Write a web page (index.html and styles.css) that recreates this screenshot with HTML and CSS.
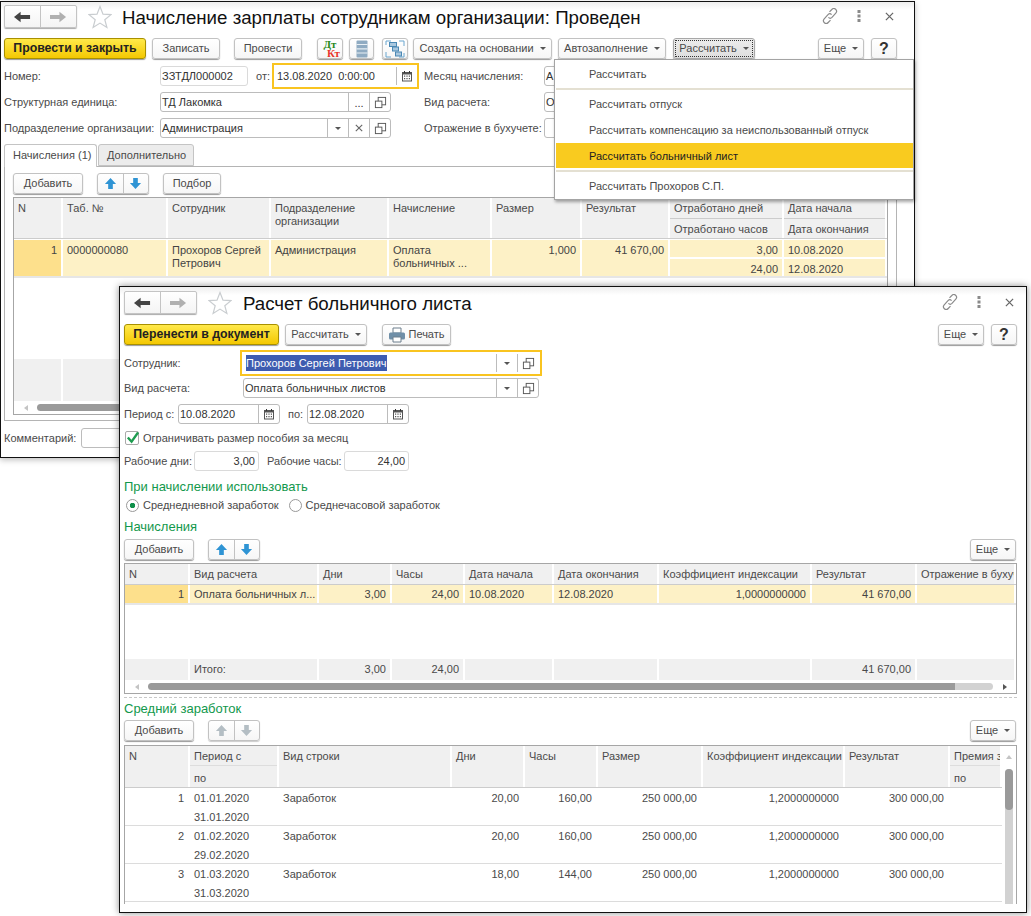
FILE: index.html

```html
<!DOCTYPE html>
<html lang="ru">
<head>
  <meta charset="UTF-8" />
  <title>Начисление зарплаты</title>
  <link rel="stylesheet" href="styles.css">
</head>
<body>
  <svg class="sprite" xmlns="http://www.w3.org/2000/svg">
    <symbol id="i-back" viewBox="0 0 18 12"><path d="M0 6 7 0.5V4H17V8H7V11.5Z"/></symbol>
    <symbol id="i-fwd" viewBox="0 0 18 12"><path d="M17 6 10 0.5V4H0V8H10V11.5Z"/></symbol>
    <symbol id="i-star" viewBox="0 0 24 24"><path d="M12 1.5 15 9.2 23 9.6 16.8 14.7 18.9 22.5 12 18.1 5.1 22.5 7.2 14.7 1 9.6 9 9.2Z" fill="#fff" stroke="#c9cdd0" stroke-width="1.2"/></symbol>
    <symbol id="i-link" viewBox="0 0 16 16"><g fill="none" stroke="#8a8a8a" stroke-width="1.2"><path d="M7.5 3.8 9.8 1.5a2.6 2.6 0 0 1 4 3.6L10 9.4a2.6 2.6 0 0 1-3.6 0"/><path d="M8.5 12.2 6.2 14.5a2.6 2.6 0 0 1-4-3.6L6 6.6a2.6 2.6 0 0 1 3.6 0"/></g></symbol>
    <symbol id="i-dots" viewBox="0 0 4 14"><g fill="#8a8a8a"><rect x="0.5" y="1" width="3" height="3"/><rect x="0.5" y="5.5" width="3" height="3"/><rect x="0.5" y="10" width="3" height="3"/></g></symbol>
    <symbol id="i-close" viewBox="0 0 10 10"><path d="M1 1 9 9M9 1 1 9" stroke="#666" stroke-width="1.4" fill="none"/></symbol>
    <symbol id="i-open" viewBox="0 0 14 14"><g fill="#fff" stroke="#555" stroke-width="1"><rect x="4.5" y="1.5" width="8" height="8"/><rect x="1.5" y="5.5" width="7" height="7"/></g></symbol>
    <symbol id="i-cal" viewBox="0 0 12 12"><path d="M1 2H11V11.5H1Z" fill="#555"/><path d="M2 4.5H10V10.5H2Z" fill="#fff"/><path d="M3 1H4V3H3ZM8 1H9V3H8Z" fill="#333"/><path d="M3 5.5H4.2V6.7H3ZM5.4 5.5H6.6V6.7H5.4ZM7.8 5.5H9V6.7H7.8ZM3 8H4.2V9.2H3ZM5.4 8H6.6V9.2H5.4ZM7.8 8H9V9.2H7.8Z" fill="#555"/></symbol>
    <symbol id="i-up" viewBox="0 0 14 14"><path d="M7 1 13 7.5H9.5V13H4.5V7.5H1Z"/></symbol>
    <symbol id="i-down" viewBox="0 0 14 14"><path d="M7 13 13 6.5H9.5V1H4.5V6.5H1Z"/></symbol>
    <symbol id="i-list" viewBox="0 0 14 18"><rect x="1.5" y="0.5" width="11" height="17" rx="1" fill="#8fabc2"/><path d="M1.5 4.5H12.5M1.5 8.8H12.5M1.5 13H12.5" stroke="#e8eff4" stroke-width="1.2"/></symbol>
    <symbol id="i-struct" viewBox="0 0 20 18"><path d="M1 5V1H6M19 13V17H14M1 12V17H6M19 6V1H14" fill="none" stroke="#6aa6cf" stroke-width="1"/><g fill="#a9c7de" stroke="#4a88b4"><rect x="4.5" y="2.5" width="7" height="4"/><rect x="7.5" y="7" width="6" height="4"/><rect x="10.5" y="12" width="6" height="4"/></g></symbol>
    <symbol id="i-print" viewBox="0 0 18 16"><path d="M5 1H13V6H5Z" fill="#fff" stroke="#6d7f8d"/><rect x="1" y="5.5" width="16" height="7" rx="1.5" fill="#6f8fa8"/><path d="M5 10H13V15H5Z" fill="#fff" stroke="#6d7f8d"/></symbol>
    <symbol id="i-check" viewBox="0 0 14 14"><path d="M2 7 6 11.5 13 1.5" fill="none" stroke="#1e9c50" stroke-width="2.6"/></symbol>
  </svg>

  <!-- Документ начисления -->
  <section class="window window-doc">
    <header class="win-head">
      <div class="nav-group">
        <span class="nav-btn nav-back"><svg class="nav-ico"><use href="#i-back"/></svg></span>
        <span class="nav-btn nav-fwd"><svg class="nav-ico"><use href="#i-fwd"/></svg></span>
      </div>
      <svg class="star"><use href="#i-star"/></svg>
      <h1 class="win-title">Начисление зарплаты сотрудникам организации: Проведен</h1>
      <div class="head-icons">
        <svg class="ico-link"><use href="#i-link"/></svg>
        <svg class="ico-dots"><use href="#i-dots"/></svg>
        <svg class="ico-close"><use href="#i-close"/></svg>
      </div>
    </header>

    <div class="toolbar">
      <button class="btn btn-primary btn-post-close">Провести и закрыть</button>
      <button class="btn btn-save">Записать</button>
      <button class="btn btn-post sep">Провести</button>
      <button class="btn btn-icon btn-dtkt"><span class="dtkt"><b class="dt">Дт</b><b class="kt">Кт</b></span></button>
      <button class="btn btn-icon btn-list"><svg class="ico-list"><use href="#i-list"/></svg></button>
      <button class="btn btn-icon btn-struct"><svg class="ico-struct"><use href="#i-struct"/></svg></button>
      <button class="btn btn-create">Создать на основании<i class="caret"></i></button>
      <button class="btn btn-auto">Автозаполнение<i class="caret"></i></button>
      <button class="btn btn-calc btn-pressed">Рассчитать<i class="caret"></i></button>
      <button class="btn btn-more push">Еще<i class="caret"></i></button>
      <button class="btn btn-help">?</button>
    </div>

    <div class="form-row">
      <div class="col-left">
        <label class="lbl lbl-doc">Номер:</label>
        <div class="field field-num field-light"><span class="val">ЗЗТДЛ000002</span></div>
        <label class="lbl lbl-from">от:</label>
        <div class="field field-date focus"><span class="val">13.08.2020&nbsp;&nbsp;0:00:00</span><span class="fbtn"><svg class="ico-cal"><use href="#i-cal"/></svg></span></div>
      </div>
      <label class="lbl lbl-right">Месяц начисления:</label>
      <div class="field field-right"><span class="val">А</span></div>
    </div>
    <div class="form-row">
      <div class="col-left">
        <label class="lbl lbl-doc">Структурная единица:</label>
        <div class="field field-doc"><span class="val">ТД Лакомка</span><span class="fbtn fdots">...</span><span class="fbtn"><svg class="ico-open"><use href="#i-open"/></svg></span></div>
      </div>
      <label class="lbl lbl-right">Вид расчета:</label>
      <div class="field field-right"><span class="val">О</span></div>
    </div>
    <div class="form-row">
      <div class="col-left">
        <label class="lbl lbl-doc">Подразделение организации:</label>
        <div class="field field-doc"><span class="val">Администрация</span><span class="fbtn"><i class="caret"></i></span><span class="fbtn"><svg class="ico-x"><use href="#i-close"/></svg></span><span class="fbtn"><svg class="ico-open"><use href="#i-open"/></svg></span></div>
      </div>
      <label class="lbl lbl-right">Отражение в бухучете:</label>
      <div class="field field-right"></div>
    </div>

    <div class="tabs">
      <div class="tab tab-active">Начисления (1)</div>
      <div class="tab">Дополнительно</div>
    </div>
    <div class="tab-panel">
      <div class="toolbar toolbar-inner">
        <button class="btn btn-add">Добавить</button>
        <div class="arrows sep"><span class="arrow-btn"><svg class="ico-arrow"><use href="#i-up"/></svg></span><span class="arrow-btn"><svg class="ico-arrow"><use href="#i-down"/></svg></span></div>
        <button class="btn btn-pick sep">Подбор</button>
      </div>
      <div class="tbl tbl-doc">
        <div class="t-row t-head cols-doc">
          <div class="c">N</div><div class="c">Таб. №</div><div class="c">Сотрудник</div><div class="c">Подразделение организации</div><div class="c">Начисление</div><div class="c">Размер</div><div class="c">Результат</div>
          <div class="c stack"><div class="sub">Отработано дней</div><div class="sub">Отработано часов</div></div>
          <div class="c stack"><div class="sub">Дата начала</div><div class="sub">Дата окончания</div></div>
        </div>
        <div class="t-row t-sel cols-doc">
          <div class="c num c-mark">1</div><div class="c">0000000080</div><div class="c">Прохоров Сергей Петрович</div><div class="c">Администрация</div><div class="c">Оплата больничных ...</div><div class="c num">1,000</div><div class="c num">41 670,00</div>
          <div class="c stack"><div class="sub num">3,00</div><div class="sub num">24,00</div></div>
          <div class="c stack"><div class="sub">10.08.2020</div><div class="sub">12.08.2020</div></div>
        </div>
        <div class="t-fill"></div>
        <div class="t-row t-foot t-foot-doc cols-doc"><div class="c"></div><div class="c"></div><div class="c"></div><div class="c"></div><div class="c"></div><div class="c"></div><div class="c"></div><div class="c"></div><div class="c"></div></div>
        <div class="hscroll"><i class="arr-left"></i><div class="thumb"></div></div>
      </div>
    </div>

    <div class="form-row row-comment">
      <label class="lbl lbl-comment">Комментарий:</label>
      <div class="field field-comment"></div>
    </div>

    <!-- Меню кнопки Рассчитать -->
    <div class="menu">
      <div class="menu-item menu-tall">Рассчитать</div>
      <div class="menu-sep"></div>
      <div class="menu-item">Рассчитать отпуск</div>
      <div class="menu-item">Рассчитать компенсацию за неиспользованный отпуск</div>
      <div class="menu-item menu-hot">Рассчитать больничный лист</div>
      <div class="menu-sep menu-sep-low"></div>
      <div class="menu-item">Рассчитать Прохоров С.П.</div>
    </div>
  </section>

  <!-- Расчет больничного листа -->
  <section class="window window-calc">
    <header class="win-head">
      <div class="nav-group">
        <span class="nav-btn nav-back"><svg class="nav-ico"><use href="#i-back"/></svg></span>
        <span class="nav-btn nav-fwd"><svg class="nav-ico"><use href="#i-fwd"/></svg></span>
      </div>
      <svg class="star"><use href="#i-star"/></svg>
      <h1 class="win-title">Расчет больничного листа</h1>
      <div class="head-icons">
        <svg class="ico-link"><use href="#i-link"/></svg>
        <svg class="ico-dots"><use href="#i-dots"/></svg>
        <svg class="ico-close"><use href="#i-close"/></svg>
      </div>
    </header>

    <div class="toolbar">
      <button class="btn btn-primary btn-transfer">Перенести в документ</button>
      <button class="btn btn-calc">Рассчитать<i class="caret"></i></button>
      <button class="btn btn-print"><svg class="ico-print"><use href="#i-print"/></svg>Печать</button>
      <button class="btn btn-more push">Еще<i class="caret"></i></button>
      <button class="btn btn-help">?</button>
    </div>

    <div class="form-row row-emp">
      <label class="lbl lbl-calc">Сотрудник:</label>
      <div class="field field-emp focus"><span class="val"><span class="selected">Прохоров Сергей Петрович</span></span><span class="fbtn"><i class="caret"></i></span><span class="fbtn"><svg class="ico-open"><use href="#i-open"/></svg></span></div>
    </div>
    <div class="form-row row-kind">
      <label class="lbl lbl-calc">Вид расчета:</label>
      <div class="field field-kind"><span class="val">Оплата больничных листов</span><span class="fbtn"><i class="caret"></i></span><span class="fbtn"><svg class="ico-open"><use href="#i-open"/></svg></span></div>
    </div>
    <div class="form-row">
      <label class="lbl lbl-period">Период с:</label>
      <div class="field field-period"><span class="val">10.08.2020</span><span class="fbtn"><svg class="ico-cal"><use href="#i-cal"/></svg></span></div>
      <label class="lbl lbl-to">по:</label>
      <div class="field field-period"><span class="val">12.08.2020</span><span class="fbtn"><svg class="ico-cal"><use href="#i-cal"/></svg></span></div>
    </div>
    <div class="check-row">
      <span class="checkbox"><svg class="ico-check"><use href="#i-check"/></svg></span>
      <span class="lbl">Ограничивать размер пособия за месяц</span>
    </div>
    <div class="form-row">
      <label class="lbl lbl-days">Рабочие дни:</label>
      <div class="field field-num-small field-light"><span class="val val-right">3,00</span></div>
      <label class="lbl lbl-hours">Рабочие часы:</label>
      <div class="field field-num-small field-light"><span class="val val-right">24,00</span></div>
    </div>

    <div class="group-title group-use">При начислении использовать</div>
    <div class="radio-row">
      <span class="radio radio-on"></span><span class="lbl lbl-radio-1">Среднедневной заработок</span>
      <span class="radio"></span><span class="lbl">Среднечасовой заработок</span>
    </div>

    <div class="group-title group-acc">Начисления</div>
    <div class="toolbar toolbar-accr">
      <button class="btn btn-add">Добавить</button>
      <div class="arrows sep"><span class="arrow-btn"><svg class="ico-arrow"><use href="#i-up"/></svg></span><span class="arrow-btn"><svg class="ico-arrow"><use href="#i-down"/></svg></span></div>
      <button class="btn btn-more push">Еще<i class="caret"></i></button>
    </div>
    <div class="tbl tbl-accr">
      <div class="t-row t-head cols-accr">
        <div class="c">N</div><div class="c">Вид расчета</div><div class="c">Дни</div><div class="c">Часы</div><div class="c">Дата начала</div><div class="c">Дата окончания</div><div class="c">Коэффициент индексации</div><div class="c">Результат</div><div class="c">Отражение в бухучете</div>
      </div>
      <div class="t-row t-sel t-one cols-accr">
        <div class="c num c-mark">1</div><div class="c">Оплата больничных л...</div><div class="c num">3,00</div><div class="c num">24,00</div><div class="c">10.08.2020</div><div class="c">12.08.2020</div><div class="c num">1,0000000000</div><div class="c num">41 670,00</div><div class="c"></div>
      </div>
      <div class="t-fill"></div>
      <div class="t-row t-foot cols-accr">
        <div class="c"></div><div class="c">Итого:</div><div class="c num">3,00</div><div class="c num">24,00</div><div class="c"></div><div class="c"></div><div class="c"></div><div class="c num">41 670,00</div><div class="c"></div>
      </div>
      <div class="hscroll hscroll-calc"><i class="arr-left"></i><div class="thumb"></div><i class="arr-right"></i></div>
    </div>

    <div class="dashed"></div>
    <div class="group-title group-avg">Средний заработок</div>
    <div class="toolbar toolbar-avg">
      <button class="btn btn-add">Добавить</button>
      <div class="arrows arrows-off sep"><span class="arrow-btn"><svg class="ico-arrow"><use href="#i-up"/></svg></span><span class="arrow-btn"><svg class="ico-arrow"><use href="#i-down"/></svg></span></div>
      <button class="btn btn-more push">Еще<i class="caret"></i></button>
    </div>
    <div class="tbl tbl-avg">
      <div class="avg-body">
        <div class="t-row t-head t-head-avg cols-avg">
          <div class="c">N</div>
          <div class="c stack"><div class="sub">Период с</div><div class="sub">по</div></div>
          <div class="c">Вид строки</div><div class="c">Дни</div><div class="c">Часы</div><div class="c">Размер</div><div class="c">Коэффициент индексации</div><div class="c">Результат</div>
          <div class="c stack"><div class="sub">Премия за</div><div class="sub">по</div></div>
        </div>
        <div class="t-row t-data cols-avg">
          <div class="c num">1</div><div class="c c-dates">01.01.2020<br>31.01.2020</div><div class="c">Заработок</div><div class="c num">20,00</div><div class="c num">160,00</div><div class="c num">250 000,00</div><div class="c num">1,2000000000</div><div class="c num">300 000,00</div><div class="c"></div>
        </div>
        <div class="t-row t-data cols-avg">
          <div class="c num">2</div><div class="c c-dates">01.02.2020<br>29.02.2020</div><div class="c">Заработок</div><div class="c num">20,00</div><div class="c num">160,00</div><div class="c num">250 000,00</div><div class="c num">1,2000000000</div><div class="c num">300 000,00</div><div class="c"></div>
        </div>
        <div class="t-row t-data cols-avg">
          <div class="c num">3</div><div class="c c-dates">01.03.2020<br>31.03.2020</div><div class="c">Заработок</div><div class="c num">18,00</div><div class="c num">144,00</div><div class="c num">250 000,00</div><div class="c num">1,2000000000</div><div class="c num">300 000,00</div><div class="c"></div>
        </div>
      </div>
      <div class="vscroll"><i class="arr-up"></i><div class="vtrack"><div class="vthumb"></div></div></div>
    </div>
  </section>
</body>
</html>
```

FILE: styles.css

```css
* {
  box-sizing: border-box;
}
html, body {
  margin: 0;
  height: 916px;
  overflow: hidden;
  background: #fff;
}
body {
  font-family: "Liberation Sans", Arial, sans-serif;
  font-size: 11px;
  line-height: 13px;
  color: #4a4a4a;
}
.sprite {
  display: none;
}

/* windows lie on a free canvas */
.window {
  position: absolute;
  background: linear-gradient(#eee, #fff 8px);
  border: 1px solid #111;
  padding-left: 3px;
  padding-right: 17px;
}
.window-doc {
  left: 0;
  top: 1px;
  width: 915px;
  height: 457px;
  box-shadow: 0 2px 6px rgba(0,0,0,0.25);
}
.window-calc {
  left: 119px;
  top: 286px;
  width: 908px;
  height: 627px;
  padding-left: 4px;
  padding-right: 9px;
  overflow: hidden;
  box-shadow: 0 0 7px rgba(0,0,0,0.45);
}

/* header */
.win-head {
  display: flex;
  align-items: flex-start;
  height: 33px;
  padding-top: 3px;
}
.window-calc .win-head {
  height: 34px;
  padding-top: 4px;
}
.nav-group {
  display: flex;
  width: 73px;
  height: 23px;
  border: 1px solid #c4c4c4;
  border-radius: 2px;
  box-shadow: 0 1px 1px #aaa;
  background: linear-gradient(#fff, #f4f4f4);
}
.nav-btn {
  flex: 1;
  display: flex;
  align-items: center;
  justify-content: center;
}
.nav-back {
  border-right: 1px solid #c4c4c4;
}
.nav-ico {
  width: 17px;
  height: 12px;
}
.nav-back .nav-ico {
  fill: #444;
}
.nav-fwd .nav-ico {
  fill: #b0b0b0;
}
.star {
  width: 24px;
  height: 24px;
  margin-left: 11px;
}
.win-title {
  margin: 2px 0 0 10px;
  font-size: 18.7px;
  line-height: 21px;
  font-weight: normal;
  color: #111;
  white-space: nowrap;
}
.window-calc .win-title {
  margin-left: 11px;
}
.head-icons {
  margin-left: auto;
  display: flex;
  align-items: center;
  height: 22px;
}
.ico-link {
  width: 16px;
  height: 16px;
}
.ico-dots {
  width: 4px;
  height: 14px;
  margin-left: 19px;
}
.ico-close {
  width: 9px;
  height: 9px;
  margin-left: 24px;
  margin-right: 3px;
}

/* buttons */
.toolbar {
  display: flex;
  align-items: flex-start;
  gap: 6px;
  height: 22px;
  margin-top: 3px;
}
.btn {
  display: flex;
  align-items: center;
  justify-content: center;
  height: 21px;
  padding: 0;
  border: 1px solid #c2c2c2;
  border-radius: 3px;
  background: linear-gradient(#fff, #f6f6f6);
  box-shadow: 0 1px 1px #9a9a9a;
  font: inherit;
  color: #4a4a4a;
}
.btn-primary {
  border-color: #a89000;
  background: linear-gradient(#ffe94a, #f4c802);
  color: #222;
  font-size: 12.3px;
  font-weight: bold;
}
.btn-post-close { width: 142px; }
.btn-transfer { width: 155px; }
.btn-save { width: 68px; }
.btn-post { width: 68px; }
.btn-icon { width: 26px; }
.btn-dtkt { margin-left: 9px; }
.btn-list { width: 25px; }
.btn-struct { margin-left: 2px; }
.btn-create { width: 139px; margin-left: -1px; }
.btn-auto { width: 108px; }
.btn-calc { width: 82px; }
.btn-pressed {
  margin-left: 1px;
  background: linear-gradient(#ececec, #dedede);
  border-color: #a8a8a8;
  outline: 1px dotted #333;
  outline-offset: -3px;
}
.btn-more { width: 46px; }
.btn-help {
  width: 26px;
  margin-left: 1px;
  font-size: 16px;
  font-weight: bold;
  color: #333;
}
.btn-add { width: 70px; }
.btn-pick { width: 58px; }
.btn-print { width: 69px; margin-left: 9px; }
.sep { margin-left: 8px; }
.push { margin-left: auto; }
.caret {
  display: inline-block;
  margin-left: 6px;
  border-left: 3px solid transparent;
  border-right: 3px solid transparent;
  border-top: 3px solid #555;
}
.dtkt {
  display: flex;
  flex-direction: column;
  width: 20px;
  font-family: "Liberation Serif", serif;
  font-size: 11px;
  line-height: 9px;
}
.dt { color: #2a8a1a; }
.kt { color: #e8342a; text-align: right; }
.ico-list { width: 14px; height: 18px; }
.ico-struct { width: 20px; height: 18px; }
.ico-print { width: 18px; height: 16px; margin-right: 2px; }
.arrows {
  display: flex;
  width: 52px;
  height: 21px;
  border: 1px solid #c2c2c2;
  border-radius: 3px;
  background: linear-gradient(#fff, #f6f6f6);
  box-shadow: 0 1px 1px #9a9a9a;
}
.arrow-btn {
  flex: 1;
  display: flex;
  align-items: center;
  justify-content: center;
}
.arrow-btn + .arrow-btn {
  border-left: 1px solid #c2c2c2;
}
.ico-arrow {
  width: 13px;
  height: 13px;
  fill: #2f94d4;
}
.arrows-off {
  box-shadow: 0 1px 1px #ccc;
}
.arrows-off .ico-arrow {
  fill: #b4bec4;
}

/* form */
.form-row {
  display: flex;
  align-items: center;
  height: 20px;
  margin-top: 6px;
}
.col-left {
  display: flex;
  align-items: center;
  width: 420px;
  flex: none;
}
.lbl {
  flex: none;
  white-space: nowrap;
}
.lbl-doc { width: 156px; }
.lbl-from { width: 24px; padding-left: 8px; }
.lbl-right { width: 120px; }
.lbl-comment { width: 77px; }
.lbl-calc { width: 119px; }
.lbl-period { width: 54px; }
.lbl-to { width: 27px; padding-left: 8px; }
.lbl-days { width: 70px; }
.lbl-hours { width: 85px; padding-left: 8px; }
.lbl-radio-1 { margin-right: 8px; }
.field {
  display: flex;
  align-items: stretch;
  flex: none;
  height: 20px;
  border: 1px solid #bcbcbc;
  border-radius: 3px;
  background: #fff;
  color: #333;
}
.field-light {
  border-color: #dadada;
}
.val {
  flex: 1;
  padding-left: 1px;
  line-height: 18px;
  white-space: nowrap;
  overflow: hidden;
}
.val-right {
  padding-right: 3px;
  text-align: right;
}
.fbtn {
  flex: none;
  display: flex;
  align-items: center;
  justify-content: center;
  width: 21px;
  border-left: 1px solid #bcbcbc;
}
.fbtn .caret {
  margin-left: 0;
}
.fdots {
  align-items: flex-end;
  line-height: 15px;
}
.field.focus {
  height: 26px;
  margin: -3px 0;
  border: 2px solid #f9c420;
  border-radius: 0;
}
.focus .val {
  padding-left: 3px;
  line-height: 22px;
}
.focus .fbtn {
  margin: 2px 0;
}
.field-num { width: 88px; }
.field-date { width: 147px; }
.field-doc { width: 231px; }
.field-right { width: 120px; }
.field-comment { width: 300px; }
.field-kind { width: 296px; }
.field-emp { width: 302px; margin-left: -3px !important; padding-right: 2px; }
.field-emp .val { padding-left: 4px; }
.field-period { width: 102px; }
.field-num-small { width: 65px; }
.ico-cal { width: 12px; height: 12px; }
.ico-open { width: 13px; height: 13px; }
.ico-x { width: 8px; height: 8px; }
.selected {
  background: #3e5cb0;
  color: #fff;
  padding: 2px 0;
}
.row-emp { margin-top: 7px; }
.row-kind { margin-top: 5px; }
.row-comment { margin-top: 7px; }
.check-row {
  display: flex;
  align-items: center;
  height: 14px;
  margin-top: 7px;
}
.checkbox {
  width: 14px;
  height: 14px;
  margin: 0 4px 0 1px;
  border: 1px solid #aaa;
  border-radius: 2px;
  background: #fff;
}
.ico-check {
  display: block;
  width: 13px;
  height: 13px;
  margin-top: -1px;
}
.radio-row {
  display: flex;
  align-items: center;
  height: 14px;
  margin-top: 5px;
}
.radio {
  width: 13px;
  height: 13px;
  margin: 0 4px 0 2px;
  border: 1px solid #999;
  border-radius: 50%;
  background: #fff;
}
.radio-on {
  background: radial-gradient(circle, #0f8f4a 0 2.5px, #fff 3px);
}
.group-title {
  height: 14px;
  padding-top: 1px;
  font-size: 13px;
  line-height: 14px;
  color: #12984c;
  white-space: nowrap;
}
.group-use { margin-top: 8px; }
.group-acc { margin-top: 7px; }
.group-avg { margin-top: 3px; }
.toolbar-accr { margin-top: 6px; height: 21px; padding-right: 1px; }
.toolbar-avg { margin-top: 5px; height: 21px; padding-right: 1px; }
.toolbar-inner { margin-top: 0; height: 24px; }
.dashed {
  height: 1px;
  margin-top: 3px;
  border-top: 1px dashed #c8c8c8;
}

/* tabs */
.tabs {
  display: flex;
  height: 22px;
  margin-top: 6px;
}
.tab {
  width: 96px;
  padding: 4px 0 0 8px;
  border: 1px solid #c4c4c4;
  border-radius: 3px 3px 0 0;
  background: #ececec;
}
.tab-active {
  position: relative;
  width: 93px;
  height: 23px;
  background: #fff;
  border-bottom: none;
  z-index: 1;
}
.tab + .tab {
  margin-left: 1px;
}
.tab-panel {
  width: 893px;
  height: 255px;
  padding: 6px 8px;
  border: 1px solid #b4b4b4;
  background: #fff;
}

/* tables */
.tbl {
  display: flex;
  flex-direction: column;
  border: 1px solid #a6a6a6;
  background: #fff;
}
.tbl-doc { width: 875px; height: 218px; }
.tbl-accr { height: 131px; margin-top: 3px; }
.tbl-avg {
  flex-direction: row;
  height: 159px;
  margin-top: 4px;
  border-bottom: none;
}
.t-row {
  display: grid;
  flex: none;
}
.cols-doc { grid-template-columns: 49px 105px 103px 118px 103px 90px 88px 114px 103px; }
.cols-accr { grid-template-columns: 65px 129px 73px 73px 89px 105px 153px 105px 99px; }
.cols-avg { grid-template-columns: 65px 89px 173px 73px 73px 105px 142px 105px 52px; }
.c {
  padding: 4px 4px 0;
  border-right: 2px solid #fff;
  overflow: hidden;
}
.c.stack {
  display: flex;
  flex-direction: column;
  padding: 0;
}
.sub {
  flex: 1;
  padding: 4px 4px 0;
  white-space: nowrap;
}
.sub + .sub {
  border-top: 2px solid #fff;
}
.num {
  text-align: right;
}
.t-head .c, .t-foot .c {
  background: #f0f0f0;
  white-space: nowrap;
}
.t-head {
  height: 20px;
  border-bottom: 1px solid #ccc;
  box-sizing: content-box;
}
.tbl-doc .t-head {
  height: 40px;
}
.tbl-doc .t-head .c {
  white-space: normal;
}
.tbl-doc .t-head .stack {
  padding: 0;
}
.tbl-doc .t-head .sub + .sub {
  border-top: 1px solid #ccc;
}
.t-head-avg {
  height: 41px;
}
.t-head-avg .sub + .sub {
  border-top: 1px solid #ddd;
  padding-top: 6px;
}
.t-sel {
  height: 38px;
  margin-top: 1px;
  border-bottom: 2px solid #e6e6e6;
}
.t-sel .c {
  background: #fdf1c6;
  color: #444;
}
.t-sel .c-mark {
  background: #fde08c;
}
.t-one {
  height: 20px;
  margin-top: 0;
}
.t-one .c {
  padding-top: 3px;
  white-space: nowrap;
}
.t-fill {
  flex: 1;
}
.t-foot {
  height: 21px;
}
.t-foot-doc {
  height: 42px;
}
.t-data {
  height: 38px;
  border-bottom: 1px solid #dcdcdc;
}
.t-data .c {
  white-space: nowrap;
}
.t-data .c-dates {
  padding-top: 1px;
  line-height: 19px;
}
.avg-body {
  flex: 1;
  min-width: 0;
}
.hscroll {
  display: flex;
  align-items: center;
  flex: none;
  height: 13px;
  padding: 0 9px 0 10px;
}
.hscroll .thumb {
  flex: 1;
  height: 7px;
  margin-left: 9px;
  border-radius: 4px;
  background: #9a9a9a;
}
.hscroll-calc .thumb {
  border-radius: 4px;
  background: linear-gradient(90deg, #9a9a9a 0 95.5%, #d2d2d2 95.5%);
}
.arr-left {
  border-top: 3px solid transparent;
  border-bottom: 3px solid transparent;
  border-right: 4px solid #c4c4c4;
}
.arr-right {
  margin-left: 10px;
  border-top: 3px solid transparent;
  border-bottom: 3px solid transparent;
  border-left: 4px solid #555;
}
.vscroll {
  flex: none;
  width: 14px;
  padding: 9px 3px 0;
}
.arr-up {
  display: block;
  width: 0;
  margin: 0 auto;
  border-left: 3px solid transparent;
  border-right: 3px solid transparent;
  border-bottom: 4px solid #c4c4c4;
}
.vtrack {
  height: 135px;
  margin-top: 10px;
  border-radius: 4px 4px 0 0;
  background: #d2d2d2;
}
.vthumb {
  height: 41px;
  border-radius: 4px;
  background: #9a9a9a;
}

/* dropdown */
.menu {
  position: absolute;
  left: 553px;
  top: 57px;
  width: 360px;
  height: 141px;
  padding: 0 0 0 1px;
  border: 1px solid #a4a4a4;
  background: #fff;
  box-shadow: 1px 2px 3px rgba(0,0,0,0.35);
}
.menu-item {
  height: 26px;
  padding-left: 33px;
  line-height: 26px;
  white-space: nowrap;
}
.menu-tall {
  height: 27px;
  padding-top: 1px;
}
.menu-sep {
  height: 2px;
  margin: 1px 0;
  background: #e4e0d2;
}
.menu-sep-low {
  margin-top: 2px;
}
.menu-hot {
  height: 25px;
  background: #f9cb1f;
  color: #222;
  line-height: 26px;
}
```
